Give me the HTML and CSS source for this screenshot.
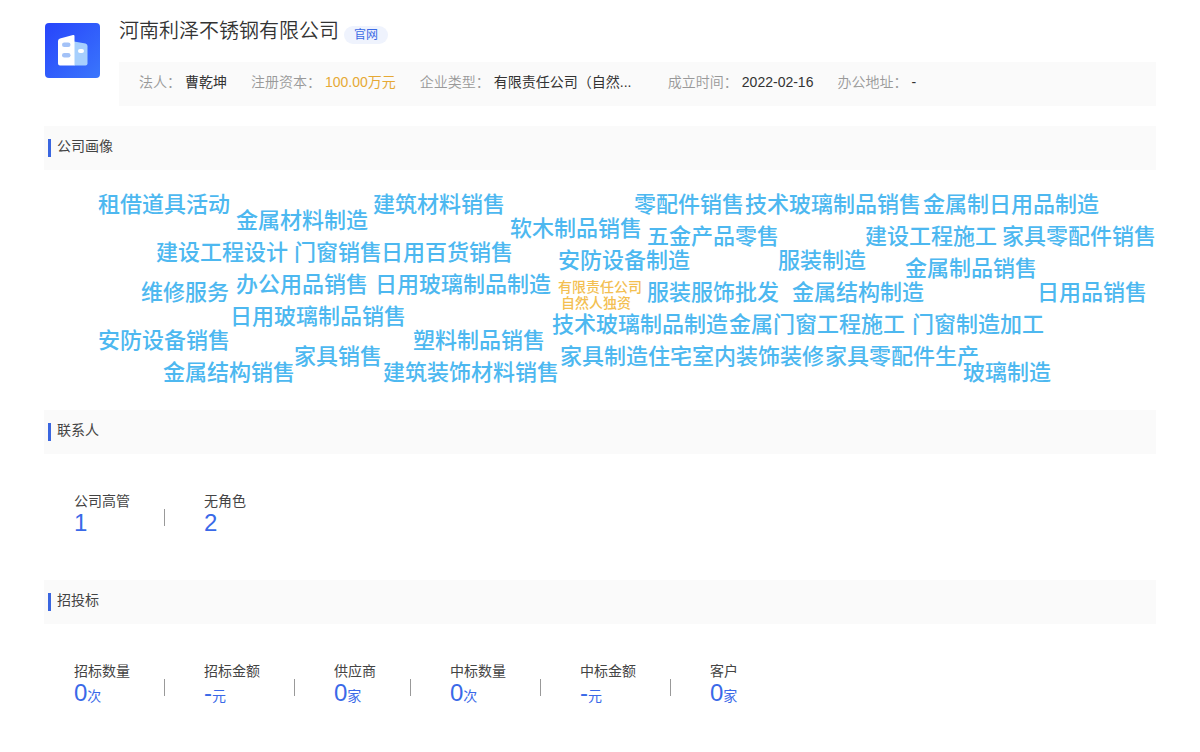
FILE: index.html
```html
<!DOCTYPE html>
<html lang="zh-CN">
<head>
<meta charset="utf-8">
<title>河南利泽不锈钢有限公司</title>
<link rel="stylesheet" href="styles.css">
</head>
<body>
<main class="page">
  <header class="company">
    <svg class="logo" viewBox="0 0 55 55" aria-hidden="true">
      <defs>
        <linearGradient id="logo-bg" x1="0" y1="0" x2="1" y2="1">
          <stop offset="0" stop-color="#2744fb"/>
          <stop offset="1" stop-color="#3a76fc"/>
        </linearGradient>
      </defs>
      <rect width="55" height="55" rx="4" fill="url(#logo-bg)"/>
      <path d="M29 18.500L40.500 20.500Q42.500 21 42.500 23V40.500Q42.500 42.500 40.500 42.500H29Z" fill="#a6cffd"/>
      <path d="M15 15.500L28 12Q29.500 11.600 29.500 13V42.500H15Q13 42.500 13 40.500V18Q13 16 15 15.500Z" fill="#fff"/>
      <rect x="17" y="19.500" width="8.500" height="4.500" rx="2.250" fill="#a3c2f7"/>
      <rect x="17" y="30" width="8.500" height="4.500" rx="2.250" fill="#a3c2f7"/>
      <rect x="33" y="26" width="6" height="4" rx="2" fill="#fff"/>
    </svg>
    <div class="company-main">
      <div class="title-row">
        <h1 class="company-name">河南利泽不锈钢有限公司</h1>
        <a class="site-link" href="#">官网</a>
      </div>
      <dl class="facts">
        <div class="fact"><dt>法人：</dt><dd>曹乾坤</dd></div>
        <div class="fact"><dt>注册资本：</dt><dd class="capital">100.00万元</dd></div>
        <div class="fact"><dt>企业类型：</dt><dd class="type">有限责任公司（自然...</dd></div>
        <div class="fact"><dt>成立时间：</dt><dd>2022-02-16</dd></div>
        <div class="fact"><dt>办公地址：</dt><dd>-</dd></div>
      </dl>
    </div>
  </header>

  <section>
    <h2 class="section-title">公司画像</h2>
    <svg class="cloud" viewBox="0 0 1112 240" role="img" aria-label="公司画像">
      <g class="words">
        <text x="54" y="42">租借道具活动</text>
        <text x="192" y="58">金属材料制造</text>
        <text x="329" y="42">建筑材料销售</text>
        <text x="466" y="66">软木制品销售</text>
        <text x="590" y="42">零配件销售</text>
        <text x="701" y="42">技术玻璃制品销售</text>
        <text x="879" y="42">金属制日用品制造</text>
        <text x="603" y="74">五金产品零售</text>
        <text x="821" y="74">建设工程施工</text>
        <text x="958" y="74">家具零配件销售</text>
        <text x="112" y="90">建设工程设计</text>
        <text x="250" y="90">门窗销售</text>
        <text x="337" y="90">日用百货销售</text>
        <text x="514" y="98">安防设备制造</text>
        <text x="734" y="98">服装制造</text>
        <text x="861" y="106">金属制品销售</text>
        <text x="97" y="130">维修服务</text>
        <text x="192" y="122">办公用品销售</text>
        <text x="331" y="122">日用玻璃制品制造</text>
        <text x="603" y="130">服装服饰批发</text>
        <text x="748" y="130">金属结构制造</text>
        <text x="993" y="130">日用品销售</text>
        <text x="186" y="154">日用玻璃制品销售</text>
        <text x="508" y="162">技术玻璃制品制造</text>
        <text x="685" y="162">金属门窗工程施工</text>
        <text x="868" y="162">门窗制造加工</text>
        <text x="54" y="178">安防设备销售</text>
        <text x="369" y="178">塑料制品销售</text>
        <text x="250" y="194">家具销售</text>
        <text x="516" y="194">家具制造</text>
        <text x="604" y="194">住宅室内装饰装修</text>
        <text x="781" y="194">家具零配件生产</text>
        <text x="119" y="210">金属结构销售</text>
        <text x="339" y="210">建筑装饰材料销售</text>
        <text x="919" y="210">玻璃制造</text>
      </g>
      <g class="kinds">
        <text x="514" y="122">有限责任公司</text>
        <text x="517" y="138">自然人独资</text>
      </g>
    </svg>
  </section>

  <section>
    <h2 class="section-title">联系人</h2>
    <dl class="stats">
      <div class="stat"><dt>公司高管</dt><dd>1</dd></div>
      <div class="stat"><dt>无角色</dt><dd>2</dd></div>
    </dl>
  </section>

  <section>
    <h2 class="section-title">招投标</h2>
    <dl class="stats">
      <div class="stat"><dt>招标数量</dt><dd>0<small>次</small></dd></div>
      <div class="stat"><dt>招标金额</dt><dd>-<small>元</small></dd></div>
      <div class="stat"><dt>供应商</dt><dd>0<small>家</small></dd></div>
      <div class="stat"><dt>中标数量</dt><dd>0<small>次</small></dd></div>
      <div class="stat"><dt>中标金额</dt><dd>-<small>元</small></dd></div>
      <div class="stat"><dt>客户</dt><dd>0<small>家</small></dd></div>
    </dl>
  </section>
</main>
</body>
</html>
```
FILE: styles.css
```css
* {
  box-sizing: border-box;
  margin: 0;
  padding: 0;
}

body {
  background: #fff;
  color: #444;
  font: 14px/20px "Liberation Sans", "Noto Sans CJK SC", sans-serif;
}

.page {
  padding: 18px 44px 0;
}

.company {
  display: flex;
  gap: 19px;
  margin-bottom: 20px;
  padding-left: 1px;
}

.logo {
  flex: none;
  width: 55px;
  height: 55px;
  margin-top: 5px;
}

.company-main {
  flex: 1;
  min-width: 0;
}

.title-row {
  display: flex;
  align-items: flex-end;
  gap: 5px;
  height: 26px;
  margin-bottom: 18px;
}

.company-name {
  color: #333;
  font-size: 20px;
  font-weight: 350;
  line-height: 26px;
}

.site-link {
  padding: 0 10px;
  border-radius: 9px;
  background: #eff3fd;
  color: #3b6ae5;
  font-size: 12px;
  line-height: 18px;
  text-decoration: none;
}

.facts {
  display: flex;
  flex-wrap: wrap;
  column-gap: 24px;
  padding: 10px 20px 14px;
  background: #fafafa;
}

.fact {
  display: flex;
  gap: 4px;
}

.fact dt {
  color: #999;
  font-weight: 350;
}

.fact dd {
  color: #333;
}

.fact .capital {
  color: #e6a935;
}

.fact .type {
  min-width: 150px;
}

.section-title {
  display: flex;
  gap: 6px;
  padding: 10px 4px 13px;
  background: #fafafa;
  font-size: 14px;
  font-weight: 400;
  line-height: 21px;
}

.section-title::before {
  width: 3px;
  height: 18px;
  margin-top: 3px;
  background: #3a66e0;
  content: "";
}

.cloud {
  display: block;
  width: 100%;
}

.words {
  fill: #4db8f0;
  font-size: 22px;
  font-weight: 500;
}

.kinds {
  fill: #f3bf52;
  font-size: 14px;
  font-weight: 500;
}

.stats {
  display: flex;
  flex-wrap: wrap;
  padding: 37px 30px 45px;
}

.stat {
  display: flex;
  flex-direction: column;
  position: relative;
  padding-right: 74px;
}

.stat:not(:last-child)::after {
  position: absolute;
  top: 18px;
  right: 39px;
  width: 1px;
  height: 17px;
  background: #999;
  content: "";
}

.stat dt {
  line-height: 20px;
}

.stat dd {
  color: #3a69e8;
  font-size: 24px;
  line-height: 24px;
}

.stat small {
  font-size: 14px;
  line-height: 14px;
}
```
